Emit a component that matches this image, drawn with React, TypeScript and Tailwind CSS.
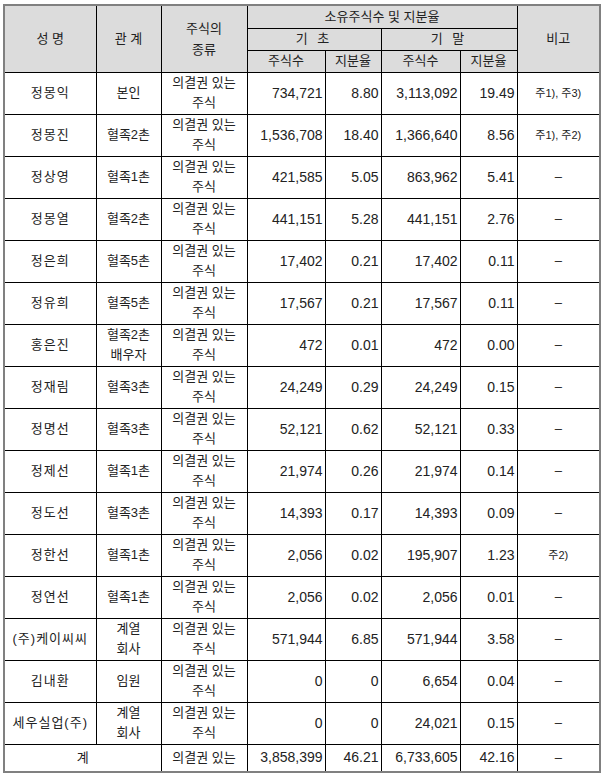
import React from 'react';

type Row = {
  name: string;
  rel: string[];
  kind: string[];
  b1: string;
  b2: string;
  e1: string;
  e2: string;
  note: string;
};

const vs = ['의결권 있는', '주식'];

const rows: Row[] = [
  { name: '정몽익', rel: ['본인'], kind: vs, b1: '734,721', b2: '8.80', e1: '3,113,092', e2: '19.49', note: '주1), 주3)' },
  { name: '정몽진', rel: ['혈족2촌'], kind: vs, b1: '1,536,708', b2: '18.40', e1: '1,366,640', e2: '8.56', note: '주1), 주2)' },
  { name: '정상영', rel: ['혈족1촌'], kind: vs, b1: '421,585', b2: '5.05', e1: '863,962', e2: '5.41', note: '–' },
  { name: '정몽열', rel: ['혈족2촌'], kind: vs, b1: '441,151', b2: '5.28', e1: '441,151', e2: '2.76', note: '–' },
  { name: '정은희', rel: ['혈족5촌'], kind: vs, b1: '17,402', b2: '0.21', e1: '17,402', e2: '0.11', note: '–' },
  { name: '정유희', rel: ['혈족5촌'], kind: vs, b1: '17,567', b2: '0.21', e1: '17,567', e2: '0.11', note: '–' },
  { name: '홍은진', rel: ['혈족2촌', '배우자'], kind: vs, b1: '472', b2: '0.01', e1: '472', e2: '0.00', note: '–' },
  { name: '정재림', rel: ['혈족3촌'], kind: vs, b1: '24,249', b2: '0.29', e1: '24,249', e2: '0.15', note: '–' },
  { name: '정명선', rel: ['혈족3촌'], kind: vs, b1: '52,121', b2: '0.62', e1: '52,121', e2: '0.33', note: '–' },
  { name: '정제선', rel: ['혈족1촌'], kind: vs, b1: '21,974', b2: '0.26', e1: '21,974', e2: '0.14', note: '–' },
  { name: '정도선', rel: ['혈족3촌'], kind: vs, b1: '14,393', b2: '0.17', e1: '14,393', e2: '0.09', note: '–' },
  { name: '정한선', rel: ['혈족1촌'], kind: vs, b1: '2,056', b2: '0.02', e1: '195,907', e2: '1.23', note: '주2)' },
  { name: '정연선', rel: ['혈족1촌'], kind: vs, b1: '2,056', b2: '0.02', e1: '2,056', e2: '0.01', note: '–' },
  { name: '(주)케이씨씨', rel: ['계열', '회사'], kind: vs, b1: '571,944', b2: '6.85', e1: '571,944', e2: '3.58', note: '–' },
  { name: '김내환', rel: ['임원'], kind: vs, b1: '0', b2: '0', e1: '6,654', e2: '0.04', note: '–' },
  { name: '세우실업(주)', rel: ['계열', '회사'], kind: vs, b1: '0', b2: '0', e1: '24,021', e2: '0.15', note: '–' },
];

const th = 'border border-black bg-[#dcdcdc] font-normal text-center align-middle p-0';
const td = 'border border-black text-center align-middle p-0';
const num = 'border border-black text-right align-middle p-0 pr-[2px] text-[14px]';

const Lines = ({ items }: { items: string[] }) => (
  <>
    {items.map((t, i) => (
      <div key={i} className="leading-[20px]">{t}</div>
    ))}
  </>
);

export default function App() {
  return (
    <div
      className="bg-white w-[603px] h-[779px] pt-[4px] pl-[3px] text-[#222] text-[13px]"
      style={{ fontFamily: '"Liberation Sans", "Noto Sans CJK KR", sans-serif' }}
    >
      <table className="border-collapse table-fixed border-2 border-[#808080] w-[596px]">
        <colgroup>
          <col className="w-[92px]" />
          <col className="w-[65px]" />
          <col className="w-[86px]" />
          <col className="w-[78px]" />
          <col className="w-[56px]" />
          <col className="w-[79px]" />
          <col className="w-[57px]" />
          <col className="w-[83px]" />
        </colgroup>
        <thead>
          <tr className="h-[23px]">
            <th rowSpan={3} className={th}>성 명</th>
            <th rowSpan={3} className={th}>관 계</th>
            <th rowSpan={3} className={th}>
              <div className="leading-[21px]">주식의</div>
              <div className="leading-[21px]">종류</div>
            </th>
            <th colSpan={4} className={th}>소유주식수 및 지분율</th>
            <th rowSpan={3} className={th}>비고</th>
          </tr>
          <tr className="h-[22px]">
            <th colSpan={2} className={`${th} tracking-[3px]`}>기 초</th>
            <th colSpan={2} className={`${th} tracking-[3px]`}>기 말</th>
          </tr>
          <tr className="h-[22px]">
            <th className={th}>주식수</th>
            <th className={th}>지분율</th>
            <th className={th}>주식수</th>
            <th className={th}>지분율</th>
          </tr>
        </thead>
        <tbody>
          {rows.map((r) => (
            <tr key={r.name} className="h-[42px]">
              <td className={`${td} tracking-[1px]`}>{r.name}</td>
              <td className={td}><Lines items={r.rel} /></td>
              <td className={td}><Lines items={r.kind} /></td>
              <td className={num}>{r.b1}</td>
              <td className={num}>{r.b2}</td>
              <td className={num}>{r.e1}</td>
              <td className={num}>{r.e2}</td>
              <td className={`${td} ${r.note === '–' ? 'text-[13px]' : 'text-[11px]'}`}>{r.note}</td>
            </tr>
          ))}
          <tr className="h-[28px]">
            <td colSpan={2} className={td}>계</td>
            <td className={td}>의결권 있는</td>
            <td className={num}>3,858,399</td>
            <td className={num}>46.21</td>
            <td className={num}>6,733,605</td>
            <td className={num}>42.16</td>
            <td className={td}>–</td>
          </tr>
        </tbody>
      </table>
    </div>
  );
}
